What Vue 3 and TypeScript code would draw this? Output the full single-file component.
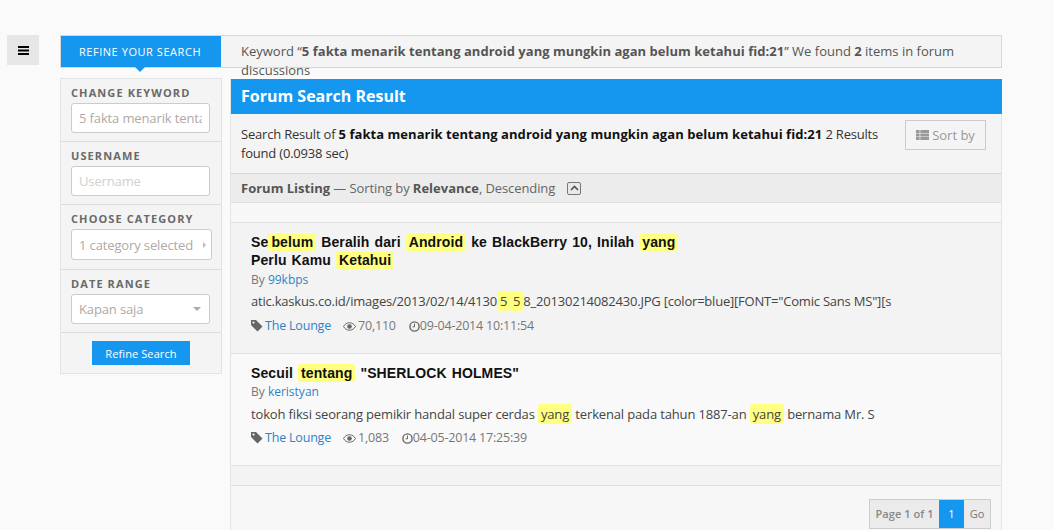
<script setup lang="ts">
const keyword = '5 fakta menarik tentang android yang mungkin agan belum ketahui fid:21';
</script>
<template>
  <div class="page">
    <button class="menu-btn" type="button">
      <svg width="11" height="9" viewBox="0 0 11 9"><path d="M0 0h11v2H0zM0 3.5h11v2H0zM0 7h11v2H0z" fill="#000" /></svg>
    </button>
    <div class="content">
      <div class="top-bar">
        <div class="tab">REFINE YOUR SEARCH</div>
        <p class="keyword">Keyword “<b>{{ keyword }}</b>” We found <b>2</b> items in forum discussions</p>
      </div>
      <div class="columns">
        <aside class="sidebar">
          <div class="field f1">
            <label>CHANGE KEYWORD</label>
            <div class="input filled"><span class="clip">{{ keyword }}</span></div>
          </div>
          <div class="field f2">
            <label>USERNAME</label>
            <div class="input placeholder">Username</div>
          </div>
          <div class="field f3">
            <label>CHOOSE CATEGORY</label>
            <div class="input filled wide">
              <span class="clip">1 category selected</span>
              <i class="arrow-right"></i>
            </div>
          </div>
          <div class="field f4">
            <label>DATE RANGE</label>
            <div class="input filled">
              <span class="clip">Kapan saja</span>
              <i class="arrow-down"></i>
            </div>
          </div>
          <div class="refine-row"><button class="refine" type="button">Refine Search</button></div>
        </aside>
        <main class="main">
          <h1 class="head">Forum Search Result</h1>
          <div class="summary">
            <p>Search Result of <b>{{ keyword }}</b> 2 Results found (0.0938 sec)</p>
            <button class="sort" type="button">
              <svg width="13" height="10" viewBox="0 0 13 10"><path d="M0 0h3.600v3H0zM4.300 0H13v3H4.300zM0 3.500h3.600v3H0zM4.300 3.500H13v3H4.300zM0 7h3.600v3H0zM4.300 7H13v3H4.300z" fill="#999" /></svg>
              Sort by
            </button>
          </div>
          <div class="listing">
            <span><b>Forum Listing</b> — Sorting by <b>Relevance</b>, Descending</span>
            <span class="collapse">
              <svg width="9" height="6" viewBox="0 0 9 6"><path d="M1 5l3.5-3.5L8 5" fill="none" stroke="#555" stroke-width="1.7" /></svg>
            </span>
          </div>
          <div class="gap-top"></div>
          <article class="item one">
            <h2>Se<mark>belum</mark> Beralih dari <mark>Android</mark> ke BlackBerry 10, Inilah <mark>yang</mark><br />Perlu Kamu <mark>Ketahui</mark></h2>
            <div class="by">By <a>99kbps</a></div>
            <p class="snippet">atic.kaskus.co.id/images/2013/02/14/4130<mark class="tight">5</mark><mark class="tight">5</mark>8_20130214082430.JPG [color=blue][FONT="Comic Sans MS"][s</p>
            <div class="meta">
              <span class="m-tag">
                <svg width="12" height="12" viewBox="0 0 12 12"><path d="M0 0h5l6.500 6.500L6.500 11.500 0 5zM2.500 1.500a1 1 0 1 0 .01 0z" fill="#666" fill-rule="evenodd" /></svg>
                <a>The Lounge</a>
              </span>
              <span class="m-view">
                <svg width="13" height="9" viewBox="0 0 13 9"><path d="M.5 4.500C2 2 4 .8 6.500.8S11 2 12.500 4.500C11 7 9 8.200 6.500 8.200S2 7 .5 4.500z" fill="none" stroke="#666" /><circle cx="6.500" cy="4.500" r="2.300" fill="#666" /></svg>
                70,110
              </span>
              <span class="m-time">
                <svg width="11" height="11" viewBox="0 0 11 11"><circle cx="5.500" cy="5.500" r="4.600" fill="none" stroke="#666" stroke-width="1.400" /><path d="M5.500 2.500v3.300H3.500" fill="none" stroke="#666" /></svg>09-04-2014 10:11:54
              </span>
            </div>
          </article>
          <article class="item two">
            <h2>Secuil <mark>tentang</mark> "SHERLOCK HOLMES"</h2>
            <div class="by">By <a>keristyan</a></div>
            <p class="snippet">tokoh fiksi seorang pemikir handal super cerdas <mark>yang</mark> terkenal pada tahun 1887-an <mark>yang</mark> bernama Mr. S</p>
            <div class="meta">
              <span class="m-tag">
                <svg width="12" height="12" viewBox="0 0 12 12"><path d="M0 0h5l6.500 6.500L6.500 11.500 0 5zM2.500 1.500a1 1 0 1 0 .01 0z" fill="#666" fill-rule="evenodd" /></svg>
                <a>The Lounge</a>
              </span>
              <span class="m-view">
                <svg width="13" height="9" viewBox="0 0 13 9"><path d="M.5 4.500C2 2 4 .8 6.500.8S11 2 12.500 4.500C11 7 9 8.200 6.500 8.200S2 7 .5 4.500z" fill="none" stroke="#666" /><circle cx="6.500" cy="4.500" r="2.300" fill="#666" /></svg>
                1,083
              </span>
              <span class="m-time">
                <svg width="11" height="11" viewBox="0 0 11 11"><circle cx="5.500" cy="5.500" r="4.600" fill="none" stroke="#666" stroke-width="1.400" /><path d="M5.500 2.500v3.300H3.500" fill="none" stroke="#666" /></svg>04-05-2014 17:25:39
              </span>
            </div>
          </article>
          <div class="strip"></div>
          <div class="pager-row">
            <div class="pager">
              <span class="info">Page 1 of 1</span>
              <span class="cur">1</span>
              <span class="go">Go</span>
            </div>
          </div>
        </main>
      </div>
    </div>
  </div>
</template>
<style>
html, body { margin: 0; background: #fafafa; overflow: hidden; }
</style>
<style scoped>
.page {
  display: flex;
  align-items: flex-start;
  height: 530px;
  overflow: hidden;
  box-sizing: border-box;
  padding: 35px 0 0 7px;
  font-family: "Open Sans", "Liberation Sans", sans-serif;
  font-size: 13px;
  color: #555;
}
.menu-btn {
  width: 32px;
  height: 30px;
  margin-right: 21px;
  flex: none;
  padding: 0;
  border: 0;
  background: #e6e6e6;
  display: flex;
  align-items: center;
  justify-content: center;
}
.content { width: 942px; flex: none; }
.top-bar {
  display: flex;
  height: 33px;
  box-sizing: border-box;
  border: 1px solid #d8d8d8;
  background: #f4f4f4;
}
.tab {
  position: relative;
  width: 160px;
  flex: none;
  box-sizing: border-box;
  padding-right: 2px;
  background: #1697ef;
  color: #fff;
  font-size: 11px;
  letter-spacing: .55px;
  line-height: 31px;
  text-align: center;
}
.tab::after {
  content: "";
  position: absolute;
  left: 74px;
  top: 31px;
  border: 5px solid transparent;
  border-top-color: #1697ef;
  border-bottom: 0;
}
.keyword {
  margin: 0;
  padding: 6px 20px;
  line-height: 19px;
  font-size: 13px;
  height: 19px;
}
.keyword b { letter-spacing: .03px; }
.columns {
  display: flex;
  align-items: flex-start;
  margin-top: 10px;
  position: relative;
}
.sidebar {
  width: 162px;
  flex: none;
  box-sizing: border-box;
  border: 1px solid #e4e4e4;
  background: #f4f4f4;
}
.field {
  box-sizing: border-box;
  padding: 6px 10px 0;
  border-bottom: 1px solid #dcdcdc;
}
.f1 { height: 63px; }
.f2 { height: 63px; }
.f3 { height: 65px; }
.f4 { height: 63px; }
.field label {
  display: block;
  font-size: 11px;
  font-weight: 700;
  letter-spacing: 1.100px;
  line-height: 16px;
  color: #6a6a6a;
  margin-bottom: 2px;
}
.input {
  display: flex;
  align-items: center;
  width: 139px;
  height: 30px;
  box-sizing: border-box;
  padding: 0 7px;
  border: 1px solid #ccc;
  border-radius: 3px;
  background: #fff;
  font-size: 13px;
  letter-spacing: -.13px;
  color: #b0a9a4;
}
.input.wide { width: 141px; height: 31px; }
.input.placeholder { color: #d0d0d0; }
.clip { flex: 1; overflow: hidden; white-space: nowrap; }
.arrow-right {
  margin-left: 4px;
  margin-right: -2px;
  border: 3px solid transparent;
  border-left-color: #bbb;
  border-right: 0;
}
.arrow-down {
  margin-right: 1px;
  border: 4px solid transparent;
  border-top-color: #aaa;
  border-bottom: 0;
}
.refine-row {
  height: 40px;
  display: flex;
  align-items: center;
  justify-content: center;
}
.refine {
  width: 98px;
  height: 24px;
  padding: 0;
  border: 0;
  background: #1697ef;
  color: #fff;
  font: 11px "Open Sans", sans-serif;
  letter-spacing: .1px;
}
.main {
  margin-left: 8px;
  margin-top: 1px;
  width: 772px;
  box-sizing: border-box;
  border-right: 1px solid #e4e4e4;
  border-left: 1px solid #e4e4e4;
  background: #f7f7f7;
}
.head {
  margin: 0 -1px 0 0;
  height: 35px;
  padding: 0 10px;
  background: #1697ef;
  color: #fff;
  font-size: 16px;
  font-weight: 700;
  line-height: 34px;
}
.summary {
  display: flex;
  justify-content: space-between;
  height: 60px;
  box-sizing: border-box;
  padding: 11px 15px 0 10px;
  background: #f4f4f4;
  border-bottom: 1px solid #d5d5d5;
}
.summary p {
  margin: 0;
  width: 650px;
  line-height: 19px;
  letter-spacing: -.2px;
  color: #333;
}
.summary b { color: #111; letter-spacing: .05px; }
.sort {
  width: 81px;
  height: 30px;
  margin-top: -5px;
  padding: 0;
  flex: none;
  display: flex;
  align-items: center;
  justify-content: center;
  gap: 3px;
  border: 1px solid #ccc;
  background: #f4f4f4;
  color: #999;
  font: 13px "Open Sans", sans-serif;
}
.listing {
  display: flex;
  align-items: center;
  height: 29px;
  box-sizing: border-box;
  padding: 0 10px;
  background: #ececec;
  border-bottom: 1px solid #e0e0e0;
  color: #666;
  line-height: 28px;
  letter-spacing: -.1px;
}
.listing b { color: #555; letter-spacing: 0; }
.collapse {
  display: flex;
  align-items: center;
  justify-content: center;
  width: 14px;
  height: 13px;
  box-sizing: border-box;
  margin-left: 12px;
  border: 1px solid #777;
  border-radius: 2px;
  background: #e8e8e8;
}
.gap-top { height: 19px; border-bottom: 1px solid #e0e0e0; }
.item {
  box-sizing: border-box;
  padding: 10px 20px 0;
  border-bottom: 1px solid #e0e0e0;
}
.one { height: 131px; background: #f3f3f3; }
.two { height: 112px; background: #f9f9f9; }
.item h2 {
  margin: 0;
  max-width: 460px;
  font: 700 14px/18px "Liberation Sans", Arial, sans-serif;
  letter-spacing: .12px;
  word-spacing: 1px;
  color: #111;
}
mark {
  background: #ffff80;
  color: inherit;
  padding: 1px 3px;
  border-radius: 3px;
}
mark.tight { padding: 1px 3px; }
.by { margin-top: 1px; font-size: 12px; line-height: 17px; color: #777; }
.one .by { margin-top: 2px; }
a { color: #2d83c5; }
.snippet {
  margin: 5px 0 0;
  font-size: 13px;
  letter-spacing: -.15px;
  line-height: 19px;
  white-space: nowrap;
  color: #444;
}
.one .snippet { margin-top: 4px; letter-spacing: -.21px; }
.meta {
  display: flex;
  align-items: center;
  margin-top: 5px;
  font-size: 12.500px;
  letter-spacing: -.2px;
  line-height: 18px;
  color: #777;
}
.one .meta { margin-top: 6px; }
.meta span { display: flex; align-items: center; }
.m-tag { gap: 2px; margin-right: 12px; }
.m-view { gap: 2px; margin-right: 13px; }
.m-time { gap: 0; }
.strip { height: 19px; background: #f3f3f3; border-bottom: 1px solid #e0e0e0; }
.pager-row {
  display: flex;
  justify-content: flex-end;
  height: 60px;
  padding: 13px 10px 0 0;
  box-sizing: border-box;
}
.pager {
  display: flex;
  height: 30px;
  box-sizing: border-box;
  border: 1px solid #ccc;
  background: #ebebeb;
  font-size: 11px;
  line-height: 28px;
  color: #888;
}
.info { width: 69px; text-align: center; font-weight: 600; letter-spacing: .05px; }
.cur { width: 25px; text-align: center; background: #1697ef; color: #fff; }
.go { width: 26px; text-align: center; color: #777; }
</style>
